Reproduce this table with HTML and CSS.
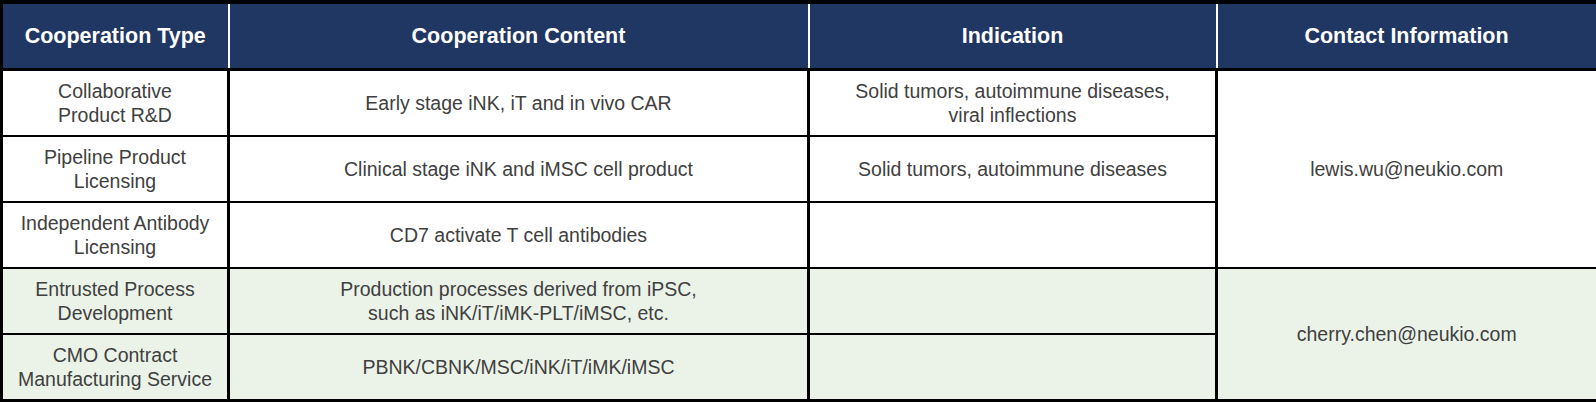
FILE: index.html
```html
<!DOCTYPE html>
<html lang="en">
<head>
<meta charset="utf-8">
<title>Cooperation</title>
<link rel="stylesheet" href="styles.css">
</head>
<body>
<table class="coop">
  <colgroup>
    <col class="c1"><col class="c2"><col class="c3"><col class="c4">
  </colgroup>
  <thead>
    <tr class="head">
      <th>Cooperation Type</th>
      <th>Cooperation Content</th>
      <th>Indication</th>
      <th>Contact Information</th>
    </tr>
  </thead>
  <tbody>
    <tr>
      <td>Collaborative<br>Product R&amp;D</td>
      <td>Early stage iNK, iT and in vivo CAR</td>
      <td>Solid tumors, autoimmune diseases,<br>viral inflections</td>
      <td rowspan="3">lewis.wu@neukio.com</td>
    </tr>
    <tr>
      <td>Pipeline Product<br>Licensing</td>
      <td>Clinical stage iNK and iMSC cell product</td>
      <td>Solid tumors, autoimmune diseases</td>
    </tr>
    <tr>
      <td>Independent Antibody<br>Licensing</td>
      <td>CD7 activate T cell antibodies</td>
      <td></td>
    </tr>
    <tr class="green">
      <td>Entrusted Process<br>Development</td>
      <td>Production processes derived from iPSC,<br>such as iNK/iT/iMK-PLT/iMSC, etc.</td>
      <td></td>
      <td rowspan="2">cherry.chen@neukio.com</td>
    </tr>
    <tr class="green">
      <td>CMO Contract<br>Manufacturing Service</td>
      <td>PBNK/CBNK/MSC/iNK/iT/iMK/iMSC</td>
      <td></td>
    </tr>
  </tbody>
</table>
</body>
</html>
```

FILE: styles.css
```css
html, body {
  margin: 0;
  padding: 0;
  background: #ffffff;
}

body {
  font-family: "Liberation Sans", Arial, sans-serif;
}

.coop {
  width: 1596px;
  table-layout: fixed;
  border-collapse: collapse;
  border-top: 4px solid #000;
  border-left: 3px solid #000;
  border-right: 4px solid #000;
  border-bottom: 3px solid #000;
}

.c1 { width: 227px; }
.c2 { width: 580px; }
.c3 { width: 408px; }
.c4 { width: 381px; }

.head th {
  background: #213763;
  color: #ffffff;
  font-size: 21.5px;
  font-weight: bold;
  height: 64px;
  padding: 0;
  text-align: center;
  vertical-align: middle;
  border-bottom: 3px solid #000;
  border-left: 2px solid #ffffff;
}

.head th:first-child {
  border-left: none;
}

.coop td {
  color: #404040;
  font-size: 19.5px;
  line-height: 24px;
  height: 64px;
  padding: 0 4px;
  text-align: center;
  vertical-align: middle;
  border-top: 2px solid #000;
  border-bottom: 2px solid #000;
  border-left: 3px solid #000;
  border-right: 3px solid #000;
}

.green td {
  background: #ebf3e8;
}
```
